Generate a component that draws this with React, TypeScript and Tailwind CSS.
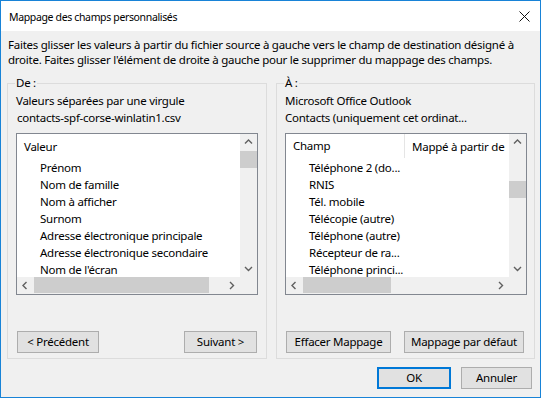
const leftItems = [
  "Prénom",
  "Nom de famille",
  "Nom à afficher",
  "Surnom",
  "Adresse électronique principale",
  "Adresse électronique secondaire",
  "Nom de l'écran",
]

const rightItems = [
  "Téléphone 2 (do...",
  "RNIS",
  "Tél. mobile",
  "Télécopie (autre)",
  "Téléphone (autre)",
  "Récepteur de ra...",
  "Téléphone princi...",
]

type Dir = "up" | "down" | "left" | "right"

const Chevron = ({ dir }: { dir: Dir }) => {
  const pts = {
    up: "1,5.5 4.5,2 8,5.5",
    down: "1,3 4.5,6.5 8,3",
    left: "5.5,1 2,4.5 5.5,8",
    right: "3,1 6.5,4.5 3,8",
  }[dir]
  return (
    <svg width="9" height="9" viewBox="0 0 9 9">
      <polyline points={pts} fill="none" stroke="#606060" strokeWidth="1.4" />
    </svg>
  )
}

interface ListProps {
  twoCols?: boolean
  vThumbTop: number
  hThumbWidth: number
  items: string[]
}

const ListBox: React.FC<ListProps> = ({ twoCols, vThumbTop, hThumbWidth, items }) => {
  return (
    <div className="w-[242px] h-[162px] border border-[#828790] bg-white flex flex-col">
      <div className="flex flex-1 min-h-0">
        <div className="flex-1 min-w-0 overflow-hidden">
          {twoCols ? (
            <div className="h-[25px] flex whitespace-nowrap">
              <div className="w-[119px] shrink-0 pl-[7px] flex items-center border-r border-[#e5e5e5] h-[24px]">Champ</div>
              <div className="pl-[7px] flex items-center h-[25px]">Mappé à partir de</div>
            </div>
          ) : (
            <div className="h-[25px] pl-[7px] flex items-center">Valeur</div>
          )}
          {items.map((it) => (
            <div key={it} className="h-[17px] pl-[23px] flex items-center whitespace-nowrap">
              {it}
            </div>
          ))}
        </div>
        <div className="w-[17px] bg-[#f0f0f0] flex flex-col">
          <div className="h-[17px] flex items-center justify-center">
            <Chevron dir="up" />
          </div>
          <div className="flex-1">
            <div className="h-[17px] bg-[#cdcdcd]" style={{ marginTop: vThumbTop }}></div>
          </div>
          <div className="h-[17px] flex items-center justify-center">
            <Chevron dir="down" />
          </div>
        </div>
      </div>
      <div className="h-[17px] flex bg-[#f0f0f0]">
        <div className="w-[17px] flex items-center justify-center">
          <Chevron dir="left" />
        </div>
        <div className="flex-1">
          <div className="h-[16px] bg-[#cdcdcd]" style={{ width: hThumbWidth }}></div>
        </div>
        <div className="w-[17px] flex items-center justify-center">
          <Chevron dir="right" />
        </div>
        <div className="w-[17px]"></div>
      </div>
    </div>
  )
}

const Btn = ({ label, w }: { label: string; w: string }) => (
  <button className={`h-[22px] ${w} bg-[#e1e1e1] border border-[#adadad] flex items-center justify-center whitespace-nowrap`}>
    {label}
  </button>
)

export default function App() {
  return (
    <div className="w-[541px] h-[398px] border border-[#1883d7] flex flex-col font-['Noto_Sans',sans-serif] text-[11.5px] tracking-[-0.25px] text-black leading-[16px] overflow-hidden">
      <div className="h-[30px] bg-white flex items-center justify-between pl-[8px] pr-[10px] shrink-0">
        <span className="pt-[1px] text-[10.5px] tracking-[-0.35px]">Mappage des champs personnalisés</span>
        <svg width="11" height="11" viewBox="0 0 11 11">
          <path d="M0.5 0.5 L10.5 10.5 M10.5 0.5 L0.5 10.5" stroke="#111" strokeWidth="1" />
        </svg>
      </div>
      <div className="flex-1 bg-[#f0f0f0] flex flex-col">
        <div className="pl-[7px] pt-[6px] leading-[15px] whitespace-nowrap">
          <div>Faites glisser les valeurs à partir du fichier source à gauche vers le champ de destination désigné à</div>
          <div>droite. Faites glisser l'élément de droite à gauche pour le supprimer du mappage des champs.</div>
        </div>
        <div className="flex gap-[9px] pl-[6px] mt-[16px]">
          <div className="relative w-[260px] h-[276px] border border-[#dcdcdc] pl-[8px] pt-[9px]">
            <span className="absolute left-[7px] top-[-9px] bg-[#f0f0f0] px-[1px]">De :</span>
            <div>Valeurs séparées par une virgule</div>
            <div className="mt-[1px] pl-[1px]">contacts-spf-corse-winlatin1.csv</div>
            <div className="mt-[7px]">
              <ListBox items={leftItems} vThumbTop={0} hThumbWidth={175} />
            </div>
            <div className="mt-[36px] flex justify-between w-[242px] px-[1px]">
              <Btn label="< Précédent" w="w-[82px]" />
              <Btn label="Suivant >" w="w-[73px]" />
            </div>
          </div>
          <div className="relative w-[259px] h-[276px] border border-[#dcdcdc] pl-[8px] pt-[9px]">
            <span className="absolute left-[7px] top-[-9px] bg-[#f0f0f0] px-[1px]">À :</span>
            <div>Microsoft Office Outlook</div>
            <div className="mt-[1px]">Contacts (uniquement cet ordinat...</div>
            <div className="mt-[7px]">
              <ListBox twoCols items={rightItems} vThumbTop={30} hThumbWidth={88} />
            </div>
            <div className="mt-[36px] flex gap-[13px] pl-[1px]">
              <Btn label="Effacer Mappage" w="w-[105px]" />
              <Btn label="Mappage par défaut" w="w-[120px]" />
            </div>
          </div>
        </div>
        <div className="flex justify-end gap-[10px] pr-[8px] mt-[8px]">
          <button className="h-[22px] w-[74px] bg-[#e1e1e1] border-2 border-[#0078d7] flex items-center justify-center">
            OK
          </button>
          <Btn label="Annuler" w="w-[71px]" />
        </div>
      </div>
    </div>
  )
}
